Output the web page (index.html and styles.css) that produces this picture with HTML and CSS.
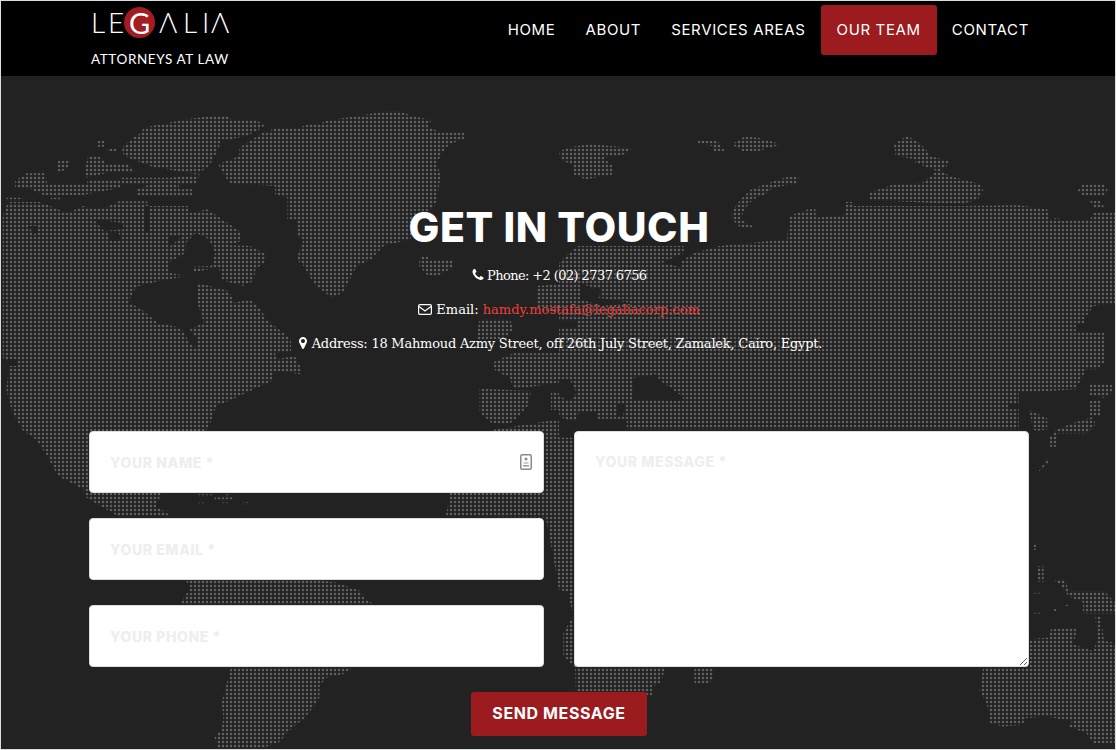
FILE: index.html
```html
<!DOCTYPE html>
<html lang="en">
<head>
<meta charset="utf-8">
<title>Legalia - Get In Touch</title>
<link rel="stylesheet" href="styles.css">
</head>
<body>
<header class="top">
	<a class="logo" href="#">
		<span class="logo-name">
			<span class="l-l">L</span><span class="l-e">E</span><span class="l-g">G</span><span class="l-a">&Lambda;</span><span class="l-l2">L</span><span class="l-i">I</span><span class="l-a2">&Lambda;</span>
		</span>
		<span class="logo-sub">ATTORNEYS AT LAW</span>
	</a>
	<nav class="menu">
		<a href="#">HOME</a>
		<a href="#">ABOUT</a>
		<a href="#">SERVICES AREAS</a>
		<a href="#" class="active">OUR TEAM</a>
		<a href="#">CONTACT</a>
	</nav>
</header>

<section class="contact">
	<svg class="map" width="1114" height="673" aria-hidden="true">
		<defs>
			<pattern id="dots" width="4" height="4" patternUnits="userSpaceOnUse">
				<circle cx="2" cy="2" r="1.25" fill="#606060"/>
			</pattern>
			<clipPath id="land-west" transform="scale(.3559 .3333)">
				<polygon points="400,155 520,130 610,118 640,118 645,130 710,132 745,145 720,165 690,180 620,195 605,230 585,270 550,295 440,275 420,270 345,240 340,215 370,185 395,170"/>
				<polygon points="760,155 835,155 865,145 895,145 910,135 1000,120 1090,105 1120,105 1155,120 1210,132 1200,150 1230,168 1305,168 1300,190 1260,205 1240,230 1225,260 1235,300 1225,370 1215,395 1170,420 1150,490 1075,510 1040,550 1000,570 960,650 930,665 880,625 850,570 830,550 850,490 830,480 830,430 805,430 805,365 770,355 770,330 690,325 640,320 610,265 670,240 670,215 735,170 760,165"/>
				<polygon points="1175,550 1190,535 1205,550 1270,550 1270,575 1225,600 1200,600 1175,570"/>
				<polygon points="40,315 70,292 125,292 130,325 240,325 245,312 335,312 335,335 230,357 120,357 85,340 40,335"/>
				<polygon points="160,255 195,255 190,275 155,295"/>
				<polygon points="245,240 275,240 300,265 355,262 380,290 300,290 240,305 235,280"/>
				<polygon points="270,195 290,195 290,212 270,212"/>
				<polygon points="300,215 325,215 325,225 300,225"/>
				<polygon points="335,305 480,305 560,295 545,325 500,325 500,340 540,340 540,360 380,358 380,340 420,325 340,325"/>
				<polygon points="15,365 60,365 60,375 15,375"/>
				<polygon points="140,365 170,365 170,372 140,372"/>
				<polygon points="5,420 20,378 110,378 160,400 185,412 230,390 270,400 300,392 330,376 410,376 415,390 525,390 530,412 580,400 615,425 670,465 675,495 640,508 700,510 745,535 745,555 715,580 710,615 680,630 620,612 612,572 540,590 540,572 590,570 602,530 585,490 548,470 520,500 520,530 470,560 470,590 525,600 455,612 380,632 357,680 390,695 440,740 505,755 530,800 545,820 552,790 530,760 570,740 552,680 552,620 640,645 655,680 700,670 730,700 745,730 780,760 815,790 815,825 770,832 775,850 825,840 845,880 845,895 770,885 760,915 720,935 650,970 605,990 585,1050 575,1065 450,1255 435,1290 480,1322 330,1322 280,1290 235,1262 232,1240 160,1200 130,1140 100,1092 60,1062 30,1002 15,940 25,860 5,845"/>
				<polygon points="555,1255 595,1255 595,1262 555,1262"/>
				<polygon points="600,1265 652,1265 652,1274 600,1274"/>
				<polygon points="555,1280 572,1280 572,1287 555,1287"/>
				<polygon points="622,1280 640,1280 640,1287 622,1287"/>
				<polygon points="680,1280 700,1280 700,1287 680,1287"/>
				<polygon points="632,1255 640,1255 640,1262 632,1262"/>
				<polygon points="520,1512 890,1512 940,1520 1010,1545 1020,1565 1050,1587 1000,1700 985,1778 960,1795 915,1805 895,1830 895,1865 880,1890 850,1930 830,1945 800,1975 790,1990 780,2000 730,2018 610,2018 600,1985 620,1960 625,1925 620,1880 635,1820 645,1778 505,1580 530,1540"/>
				<polygon points="1345,730 1430,730 1440,760 1415,790 1335,790"/>
				<polygon points="1505,630 1568,625 1568,710 1505,700"/>
				<polygon points="1380,860 1440,832 1568,832 1568,920 1440,940 1430,905 1390,885"/>
				<polygon points="1345,938 1490,945 1480,990 1450,1025 1430,1042 1380,1042 1345,1010"/>
				<polygon points="1545,945 1568,945 1568,1002 1545,1002"/>
				<polygon points="1380,1062 1568,1030 1568,1545 1558,1480 1535,1345 1530,1325 1250,1322 1262,1252"/>
			</clipPath>
			<clipPath id="land-east" transform="translate(558 0) scale(.3564 .3333)">
				<polygon points="0,230 20,215 85,205 205,215 185,235 125,245 150,270 155,295 75,310 40,295 40,265 10,255"/>
				<polygon points="390,195 445,195 465,225 435,225 430,210 390,202"/>
				<polygon points="485,205 520,182 560,185 625,205 560,225 515,225"/>
				<polygon points="940,205 975,180 1005,195 1030,220 1040,240 1095,255 1085,275 1070,280 1095,300 1185,325 1190,345 1175,370 1130,385 870,372 870,350 940,325 1020,320 1060,285 1000,260 1000,250 945,240"/>
				<polygon points="640,303 672,303 670,322 600,335 580,355 545,370 520,400 510,430 550,455 510,455 485,430 485,405 510,370 540,340 590,320"/>
				<polygon points="1455,345 1470,325 1530,325 1540,345 1530,358 1470,358"/>
				<polygon points="1490,375 1520,375 1530,395 1500,395"/>
				<polygon points="805,378 825,378 825,390 1130,390 1290,388 1370,400 1375,430 1400,425 1410,435 1490,430 1500,410 1565,410 1565,680 1500,690 1480,720 1475,740 1450,745 1450,765 1500,770 1530,770 1530,860 1510,880 1480,880 1450,940 1290,950 1290,1060 190,1060 190,1028 105,1028 105,1010 55,1010 50,1035 20,1035 0,1015 0,560 20,540 50,510 350,510 350,530 290,560 345,575 345,555 380,530 450,510 640,490 645,420 700,400 720,400 720,425 780,420 805,415"/>
				<polygon points="0,1085 200,1085 480,1500 300,1778 298,1778 285,1822 262,1832 262,1858 48,1860 45,1775 12,1740 12,1670 40,1620 25,1550 0,1540"/>
				<polygon points="380,1778 435,1778 435,1805 420,1822 380,1822"/>
				<polygon points="1320,1002 1370,1027 1370,1060 1340,1065 1330,1060"/>
				<polygon points="1490,925 1550,925 1555,945 1530,965 1490,960"/>
				<polygon points="1490,975 1520,975 1520,1020 1490,1020"/>
				<polygon points="1440,1042 1500,1022 1505,1047 1480,1072 1400,1072 1395,1112 1375,1112 1375,1087 1395,1062"/>
				<polygon points="1345,1187 1360,1165 1370,1147 1372,1160 1350,1187"/>
				<polygon points="1330,1402 1338,1402 1338,1422 1330,1422"/>
				<polygon points="1342,1472 1360,1472 1360,1517 1345,1517"/>
				<polygon points="1330,1547 1350,1547 1350,1553 1330,1553"/>
				<polygon points="1330,1607 1350,1607 1350,1613 1330,1613"/>
				<polygon points="1385,1600 1395,1600 1395,1605 1385,1605"/>
				<polygon points="1420,1585 1430,1585 1430,1590 1420,1590"/>
				<polygon points="1385,1510 1420,1510 1430,1545 1530,1545 1560,1580 1565,1612 1470,1612 1470,1578 1430,1562 1410,1530"/>
				<polygon points="1505,1620 1520,1620 1530,1700 1510,1700"/>
				<polygon points="1380,1660 1450,1655 1450,1680 1440,1705 1470,1715 1500,1725 1510,1690 1555,1700 1565,1730 1568,2000 1500,2002 1480,1972 1430,1952 1440,1937 1370,1922 1310,1927 1300,1947 1245,1952 1210,1942 1200,1882 1180,1845 1190,1777 1320,1690 1375,1685"/>
			</clipPath>
		</defs>
		<rect width="1114" height="673" fill="url(#dots)" clip-path="url(#land-west)"/>
		<rect width="1114" height="673" fill="url(#dots)" clip-path="url(#land-east)"/>
		<!-- bays and lakes -->
		<g fill="#222" transform="scale(.3559 .3333)">
			<polygon points="80,450 100,450 105,470 90,475"/>
			<polygon points="300,470 330,470 340,495 305,495"/>
			<polygon points="260,430 340,440 345,460 290,465"/>
			<polygon points="470,480 510,480 470,515"/>
			<polygon points="403,390 415,390 415,470 403,470"/>
			<polygon points="20,850 45,850 45,870 20,870"/>
		</g>
		<g fill="#222" transform="translate(558 0) scale(.3564 .3333)">
			<polygon points="210,905 240,900 270,895 285,915 345,960 350,975 205,970"/>
			<polygon points="0,910 30,910 50,950 30,975 0,960"/>
			<polygon points="165,985 185,985 180,1020 165,1020"/>
			<polygon points="60,625 120,640 110,665 200,680 120,690 60,670"/>
			<polygon points="0,735 50,735 50,755 0,755"/>
			<polygon points="1260,985 1290,985 1290,1000 1260,1000"/>
		</g>
	</svg>

	<div class="contact-inner">
		<h1>GET IN TOUCH</h1>
		<p class="info info-phone">
			<svg class="ico" viewBox="0 0 1792 1792"><path d="M1600 1240q0 27-10 70.5t-21 68.5q-21 50-122 106-94 51-186 51-27 0-53-3.5t-57.5-12.5-47-14.5-55.5-20.5-49-18q-98-35-175-83-127-79-264-216t-216-264q-48-77-83-175-3-9-18-49t-20.5-55.5-14.5-47-12.5-57.5-3.5-53q0-92 51-186 56-101 106-122 25-11 68.5-21t70.5-10q14 0 21 3 18 6 53 76 11 19 30 54t35 63.5 31 53.5q3 4 17.5 25t21.5 35.5 7 28.5q0 20-28.5 50t-62 55-62 53-28.5 46q0 9 5 22.5t8.5 20.5 14 24 11.5 19q76 137 174 235t235 174q2 1 19 11.5t24 14 20.5 8.5 22.5 5q18 0 46-28.5t53-62 55-62 50-28.5q14 0 28.5 7t35.5 21.5 25 17.5q25 15 53.5 31t63.5 35 54 30q70 35 76 53 3 7 3 21z"/></svg>
			Phone: +2 (02) 2737 6756
		</p>
		<p class="info">
			<svg class="ico ico-mail" viewBox="0 0 14 11"><rect x=".6" y=".6" width="12.8" height="9.8" rx="1.4" fill="none" stroke="#fff" stroke-width="1.2"/><path d="M1 2.4 7 7l6-4.6" fill="none" stroke="#fff" stroke-width="1.2"/></svg>
			Email: <a href="#">hamdy.mostafa@legaliacorp.com</a>
		</p>
		<p class="info info-address">
			<svg class="ico" viewBox="0 0 1792 1792"><path d="M1152 640q0-106-75-181t-181-75-181 75-75 181 75 181 181 75 181-75 75-181zm256 0q0 109-33 179l-364 774q-16 33-47.5 52t-67.5 19-67.5-19-46.5-52l-365-774q-33-70-33-179 0-212 150-362t362-150 362 150 150 362z"/></svg>
			Address: 18 Mahmoud Azmy Street, off 26th July Street, Zamalek, Cairo, Egypt.
		</p>

		<form class="form">
			<div class="fields">
				<div class="field">
					<input type="text" placeholder="YOUR NAME *">
					<svg class="field-ico" width="12" height="16" viewBox="0 0 12 16"><rect x=".75" y=".75" width="10.5" height="14.5" rx="1.5" fill="#fff" stroke="#8a8a8a" stroke-width="1.5"/><circle cx="6" cy="5" r="1.5" fill="#8a8a8a"/><path d="M3.5 8.500h5v1h-5zM3 11h6v1.5H3z" fill="#9a9a9a"/></svg>
				</div>
				<input type="text" placeholder="YOUR EMAIL *">
				<input type="text" placeholder="YOUR PHONE *">
			</div>
			<textarea placeholder="YOUR MESSAGE *"></textarea>
			<button type="button" class="send">SEND MESSAGE</button>
		</form>
	</div>
</section>
</body>
</html>
```

FILE: styles.css
```css
*{margin:0;padding:0;box-sizing:border-box;}
html,body{height:750px;overflow:hidden;}
body{border:1px solid #ddd;background:#222;font-family:"DejaVu Serif","Liberation Serif",serif;color:#fff;}
a{text-decoration:none;}

/* header */
.top{height:75px;background:#000;display:flex;justify-content:space-between;padding:0 71px 0 88px;}
.logo{display:block;width:142px;color:#fff;padding-top:6px;}
.logo-name{display:flex;align-items:center;height:31px;font-family:Lato,"Liberation Sans",sans-serif;font-weight:300;font-size:28px;line-height:31px;}
.l-l{margin-left:2px;width:17px;}
.l-e{width:16px;}
.l-g{width:31px;height:31px;border-radius:50%;background:#a11d22;text-align:center;font-weight:400;font-size:29px;margin-right:4px;}
.l-a{width:24px;}
.l-l2{width:19px;}
.l-i{width:9px;}
.logo-sub{display:block;margin-top:12px;font-family:Lato,"Liberation Sans",sans-serif;font-size:13.5px;letter-spacing:.6px;line-height:18px;white-space:nowrap;padding-left:2px;}
.menu{display:flex;align-items:flex-start;padding-top:4px;}
.menu a{display:block;padding:15px;height:50px;line-height:20px;font-family:Inter,"Liberation Sans",sans-serif;font-size:15px;letter-spacing:.65px;color:#fff;border-radius:3px;}
.menu a.active{padding:15px 16px;background:#9b1b1e;}

/* contact */
.contact{position:relative;height:673px;}
.map{position:absolute;left:0;top:0;}
.contact-inner{position:relative;padding:128px 86px 0 88px;text-align:center;}
h1{font-family:Inter,"Liberation Sans",sans-serif;font-weight:800;font-size:41px;line-height:46px;letter-spacing:.6px;margin-bottom:16px;}
.info{font-size:13px;line-height:20px;margin-bottom:14px;}
.info a{color:#ef3e3a;}
.info-phone{letter-spacing:-.6px;}
.info-address{letter-spacing:-.23px;}
.ico{width:14px;height:14px;fill:#fff;vertical-align:-2px;margin-right:-2px;}
.ico-mail{width:14px;height:11px;vertical-align:-1px;margin-right:0;}

/* form */
.form{display:grid;grid-template-columns:455px 455px;column-gap:30px;margin-top:77px;text-align:left;}
.fields{display:flex;flex-direction:column;gap:25px;}
.field{position:relative;}
.field-ico{position:absolute;right:12px;top:23px;}
input,textarea{display:block;width:455px;height:62px;padding:0 20px;border:1px solid #ddd;border-radius:4px;background:#fff;font-family:Inter,"Liberation Sans",sans-serif;font-weight:800;font-size:14px;letter-spacing:.6px;}
textarea{height:236px;padding-top:21px;line-height:18px;}
::placeholder{color:#eee;opacity:1;}
.send{grid-column:1 / 3;justify-self:center;width:176px;height:44px;margin-top:25px;padding-bottom:2px;border:0;border-radius:3px;background:#9b1b1e;color:#fff;font-family:Inter,"Liberation Sans",sans-serif;font-weight:700;font-size:16px;letter-spacing:.6px;}
```
